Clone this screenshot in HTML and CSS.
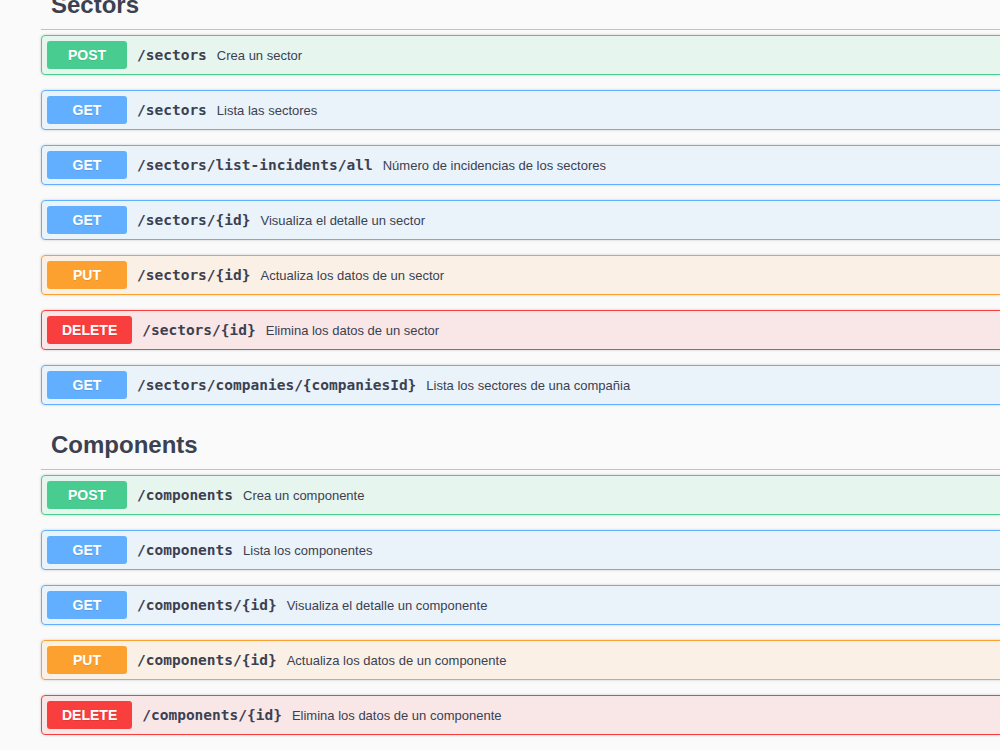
FILE: index.html
```html
<!DOCTYPE html>
<html lang="es">
<head>
    <meta charset="UTF-8">
    <meta name="viewport" content="width=device-width, initial-scale=1.0">
    <title>API</title>
    <link rel="stylesheet" href="styles.css">
</head>
<body>
    <div class="wrapper">
        <div class="tag-section first">
            <h3 class="opblock-tag">Sectors</h3>
            <div class="opblock post">
                <span class="method">POST</span>
                <span class="path">/sectors</span>
                <span class="desc">Crea un sector</span>
            </div>
            <div class="opblock get">
                <span class="method">GET</span>
                <span class="path">/sectors</span>
                <span class="desc">Lista las sectores</span>
            </div>
            <div class="opblock get">
                <span class="method">GET</span>
                <span class="path">/sectors/list-incidents/all</span>
                <span class="desc">Número de incidencias de los sectores</span>
            </div>
            <div class="opblock get">
                <span class="method">GET</span>
                <span class="path">/sectors/{id}</span>
                <span class="desc">Visualiza el detalle un sector</span>
            </div>
            <div class="opblock put">
                <span class="method">PUT</span>
                <span class="path">/sectors/{id}</span>
                <span class="desc">Actualiza los datos de un sector</span>
            </div>
            <div class="opblock delete">
                <span class="method">DELETE</span>
                <span class="path">/sectors/{id}</span>
                <span class="desc">Elimina los datos de un sector</span>
            </div>
            <div class="opblock get">
                <span class="method">GET</span>
                <span class="path">/sectors/companies/{companiesId}</span>
                <span class="desc">Lista los sectores de una compañia</span>
            </div>
        </div>

        <div class="tag-section">
            <h3 class="opblock-tag">Components</h3>
            <div class="opblock post">
                <span class="method">POST</span>
                <span class="path">/components</span>
                <span class="desc">Crea un componente</span>
            </div>
            <div class="opblock get">
                <span class="method">GET</span>
                <span class="path">/components</span>
                <span class="desc">Lista los componentes</span>
            </div>
            <div class="opblock get">
                <span class="method">GET</span>
                <span class="path">/components/{id}</span>
                <span class="desc">Visualiza el detalle un componente</span>
            </div>
            <div class="opblock put">
                <span class="method">PUT</span>
                <span class="path">/components/{id}</span>
                <span class="desc">Actualiza los datos de un componente</span>
            </div>
            <div class="opblock delete">
                <span class="method">DELETE</span>
                <span class="path">/components/{id}</span>
                <span class="desc">Elimina los datos de un componente</span>
            </div>
        </div>
    </div>
</body>
</html>
```

FILE: styles.css
```css
html {
    overflow: hidden;
}
body {
    margin: 0;
    background: #fafafa;
    font-family: "Liberation Sans", Arial, sans-serif;
    color: #3b4151;
}
.wrapper {
    width: 1100px;
    padding: 0 0 0 41px;
}
.tag-section {
    margin-bottom: 15px;
}
.tag-section.first {
    margin-top: -20px;
}
.opblock-tag {
    margin: 0 0 5px;
    padding: 10px 20px 10px 10px;
    font-size: 24px;
    line-height: 29px;
    font-weight: bold;
    color: #3b4151;
    border-bottom: 1px solid rgba(59, 65, 81, 0.3);
}
.opblock {
    display: flex;
    align-items: center;
    height: 38px;
    padding: 0 5px;
    margin-bottom: 15px;
    border: 1px solid;
    border-radius: 4px;
    box-shadow: 0 0 3px rgba(0, 0, 0, 0.19);
}
.method {
    box-sizing: border-box;
    min-width: 80px;
    padding: 6px 15px;
    font-size: 14px;
    line-height: 16px;
    font-weight: bold;
    text-align: center;
    color: #fff;
    border-radius: 3px;
    text-shadow: 0 1px 0 rgba(0, 0, 0, 0.1);
}
.path {
    padding: 0 10px;
    font-family: "DejaVu Sans Mono", "Liberation Mono", monospace;
    font-size: 14.5px;
    font-weight: bold;
    color: #3b4151;
}
.desc {
    font-size: 13px;
    color: #3b4151;
}
.post {
    border-color: #49cc90;
    background: rgba(73, 204, 144, 0.1);
}
.post .method {
    background: #49cc90;
}
.get {
    border-color: #61affe;
    background: rgba(97, 175, 254, 0.1);
}
.get .method {
    background: #61affe;
}
.put {
    border-color: #fca130;
    background: rgba(252, 161, 48, 0.1);
}
.put .method {
    background: #fca130;
}
.delete {
    border-color: #f93e3e;
    background: rgba(249, 62, 62, 0.1);
}
.delete .method {
    background: #f93e3e;
}
```
